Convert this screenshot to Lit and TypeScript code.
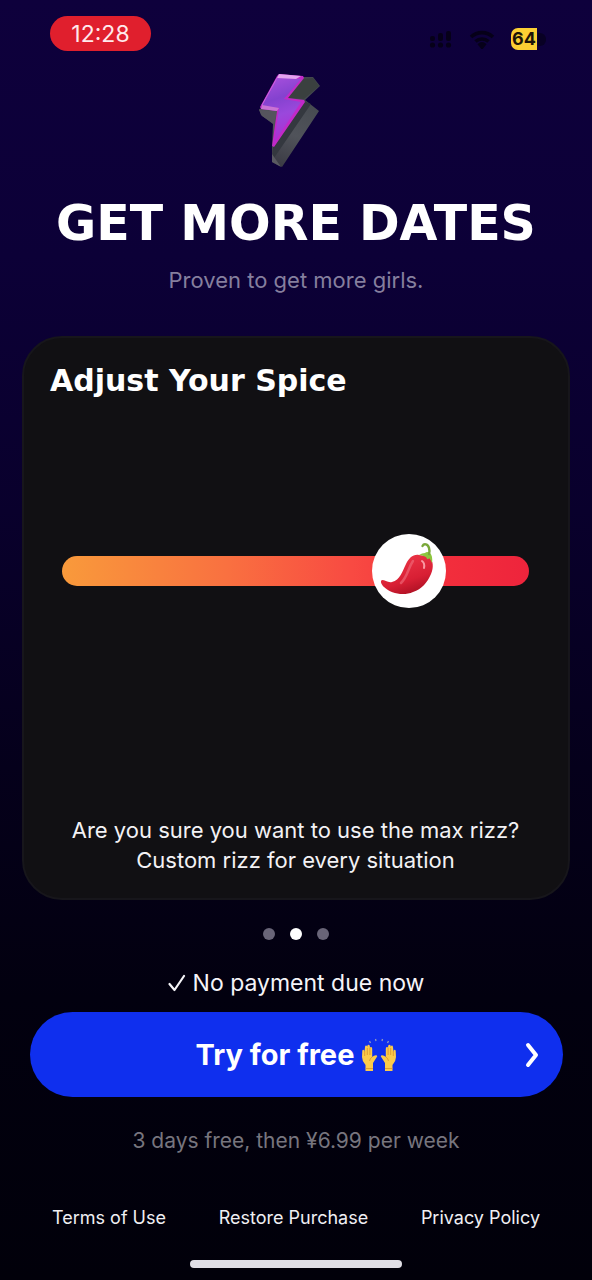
import { LitElement, html, css } from "lit";
import { customElement, state } from "lit/decorators.js";

@customElement("status-bar")
class StatusBar extends LitElement {
  static styles = css`
    :host { display: flex; justify-content: space-between; align-items: flex-start; padding: 16px 46px 0 50px; height: 56px; box-sizing: border-box; }
    .time { width: 101px; height: 35px; border-radius: 18px; background: #e01f2d; color: #ffe9ec; font-size: 23px; line-height: 36px; text-align: center; }
    .icons { display: flex; align-items: center; gap: 16px; padding-top: 12px; }
    .icons svg { display: block; }
    .battery { display: flex; align-items: center; }
    .level { width: 26px; height: 22px; border-radius: 7px 0 0 7px; background: #fbcf33; color: #1d1408; font-size: 18px; line-height: 22px; font-weight: 700; text-align: center; }
    .cap { width: 8px; height: 13px; margin-left: 1px; border-radius: 0 6px 6px 0; background: #080024; }
  `;
  render() {
    return html`
      <div class="time">12:28</div>
      <div class="icons">
        <svg width="24" height="18" viewBox="0 0 24 18" fill="#060019" aria-hidden="true">
          <rect x="1" y="6" width="5" height="5" rx="2"/><rect x="9" y="3" width="5" height="8" rx="2"/><rect x="17" y="1" width="5" height="10" rx="2"/>
          <circle cx="3.5" cy="15" r="2.6"/><circle cx="11.5" cy="15" r="2.6"/><circle cx="19.5" cy="15" r="2.6"/>
        </svg>
        <svg width="26" height="19" viewBox="0 0 26 19" fill="none" stroke="#060019" stroke-width="3.600" aria-hidden="true">
          <path d="M2 7a16 16 0 0 1 22 0M6.500 11.500a9.500 9.500 0 0 1 13 0"/><path d="M13 17l-2-2.500q2-1.500 4 0z" fill="#060019"/>
        </svg>
        <div class="battery"><div class="level">64</div><div class="cap"></div></div>
      </div>
    `;
  }
}

@customElement("spice-slider")
class SpiceSlider extends LitElement {
  @state() private value = 79;
  static styles = css`
    :host { display: block; }
    .slider { position: relative; height: 74px; }
    input { -webkit-appearance: none; appearance: none; display: block; width: 100%; height: 74px; margin: 0; background: transparent; cursor: pointer; }
    input::-webkit-slider-runnable-track { height: 30px; border-radius: 15px; background: linear-gradient(90deg, #f99a3b 0%, #f97140 35%, #f84a42 62%, #f22e3c 82%, #ee243c 100%); }
    input::-webkit-slider-thumb { -webkit-appearance: none; width: 74px; height: 74px; margin-top: -22px; border-radius: 50%; background: #fff; }
    .pepper { position: absolute; top: 0; width: 74px; height: 74px; pointer-events: none; }
  `;
  render() {
    return html`
      <div class="slider">
        <input type="range" min="0" max="100" aria-label="Spice level" .value=${String(this.value)}
          @input=${(e: Event) => (this.value = Number((e.target as HTMLInputElement).value))} />
        <svg class="pepper" style="left: calc((100% - 74px) * ${this.value / 100})" viewBox="0 0 74 74" aria-hidden="true">
          <defs>
            <linearGradient id="red" x1="0.300" y1="0.100" x2="0.700" y2="1">
              <stop offset="0" stop-color="#ea3345"/><stop offset="0.600" stop-color="#d81f34"/><stop offset="1" stop-color="#a90f22"/>
            </linearGradient>
          </defs>
          <path d="M47 21C41 20 37 24 34 30C30 38 28 46 20 48C16 49 13 46 10 46C8 47 9 50 12 53C19 60 32 62 41 58C50 55 55 49 59 40C62 33 61 27 58 24Q53 21 47 21Z" fill="url(#red)"/>
          <path d="M41 27C36 34 36 42 29 49" fill="none" stroke="#f0707e" stroke-width="2.500" stroke-linecap="round" opacity="0.600"/>
          <path d="M50 27Q53 29 52 34" fill="none" stroke="#ffb7bd" stroke-width="2" stroke-linecap="round" opacity="0.800"/>
          <path d="M47 21Q50 19 53 19Q55 17 58 19Q61 22 60 29Q59 26 57 24Q56 27 54 23Q50 21 47 21Z" fill="#8cc63d"/>
          <path d="M57 20Q58 17 57 14C56 10 52 9 50.500 12" fill="none" stroke="#7aa83a" stroke-width="2.400" stroke-linecap="round"/>
        </svg>
      </div>
    `;
  }
}

@customElement("app-root")
class AppRoot extends LitElement {
  @state() private page = 1;
  static styles = css`
    :host { display: block; font-family: Inter, "Liberation Sans", sans-serif; color: #fff; }
    .screen { display: flex; flex-direction: column; min-height: 100vh; box-sizing: border-box; padding-bottom: 12px; background: linear-gradient(180deg, #0e003c 0%, #0c0037 20%, #09002c 40%, #05001b 60%, #02000f 78%, #01000a 100%); }
    .bolt { display: block; width: 64px; height: 98px; margin: 15px auto 0; padding-right: 14px; }
    h1 { margin: 27px 0 0; font-family: "DejaVu Sans", sans-serif; font-size: 49px; line-height: 56px; font-weight: 700; text-align: center; white-space: nowrap; }
    .sub { margin: 13px 0 0; font-size: 22px; line-height: 30px; text-align: center; color: #857f9e; }
    .card { display: flex; flex-direction: column; flex: 1; margin: 41px 22px 0; padding: 23px 39px 23px 38px; border: 2px solid #17161b; border-radius: 40px; background: #111013; }
    h2 { margin: 0 0 0 -12px; font-family: "DejaVu Sans", sans-serif; font-size: 30px; line-height: 40px; font-weight: 700; }
    spice-slider { margin-top: 133px; }
    .copy { margin: auto 0 0; font-size: 22px; line-height: 30px; text-align: center; color: #f3f2f5; }
    .dots { display: flex; justify-content: center; gap: 15px; margin-top: 28px; }
    .dot { width: 12px; height: 12px; padding: 0; border: 0; border-radius: 50%; background: #696578; cursor: pointer; }
    .dot.on { background: #fff; }
    .due { display: flex; align-items: center; justify-content: center; gap: 7px; margin: 28px 0 0; font-size: 23px; line-height: 30px; color: #f5f4f8; }
    .cta { display: flex; align-items: center; justify-content: center; position: relative; height: 85px; margin: 14px 29px 0 30px; padding: 0; border: 0; border-radius: 43px; background: #0f2fee; color: #fff; font-family: inherit; font-size: 29px; font-weight: 700; gap: 7px; cursor: pointer; }
    .chevron { position: absolute; right: 24px; }
    .price { margin: 29px 0 0; font-size: 21px; line-height: 30px; text-align: center; color: #77757e; }
    .links { display: flex; justify-content: space-between; margin: 49px 52px 0; font-size: 18px; line-height: 26px; }
    .links a { color: #f0eff3; text-decoration: none; }
    .home { width: 212px; height: 8px; margin: 29px auto 0; border-radius: 4px; background: #e0dee6; }
  `;
  render() {
    return html`
      <main class="screen">
        <status-bar></status-bar>
        <svg class="bolt" viewBox="0 0 64 98" aria-hidden="true">
          <defs>
            <linearGradient id="face" x1="0.200" y1="0" x2="0.400" y2="1">
              <stop offset="0" stop-color="#a850dd"/><stop offset="0.350" stop-color="#8442cf"/><stop offset="0.600" stop-color="#9a48dc"/><stop offset="1" stop-color="#b02cd0"/>
            </linearGradient>
            <linearGradient id="side" x1="0.600" y1="0" x2="0.300" y2="1">
              <stop offset="0" stop-color="#41464c"/><stop offset="0.600" stop-color="#50535a"/><stop offset="1" stop-color="#3a3a43"/>
            </linearGradient>
          </defs>
          <path d="M46 6L56 6L63 15L48 29L62 40L25 96L15 91L15 76L16 53L4 44L2 38L20 36Z" fill="url(#side)"/>
          <path d="M47 8L56 7L62 15L47 28L31 27Z" fill="#3a403f"/>
          <path d="M16 75L47 30L54 33L17 87L15 90Z" fill="#34383f"/>
          <path d="M2 39L20 40L17 53L5 45Z" fill="#55545d"/>
          <path d="M24 96L15 91L15 83Z" fill="#5a5a61"/>
          <path d="M22 3L46 5L47 7L31 27L47 29L48 31L17 76L15 75L20 40L4 38L3 36L20 5Z" fill="#c229c8"/>
          <path d="M21 6L44 8L27 28L44 31L17 72L22 37L5 35Z" fill="url(#face)"/>
          <path d="M22 3L44 5L39 8L20 7Z" fill="#e3a3ee"/>
          <path d="M5 34L22 37L20 40L4 38Z" fill="#c873d3"/>
          <path d="M20 7L5 34" fill="none" stroke="#c268df" stroke-width="1"/>
        </svg>
        <h1>GET MORE DATES</h1>
        <p class="sub">Proven to get more girls.</p>
        <section class="card">
          <h2>Adjust Your Spice</h2>
          <spice-slider></spice-slider>
          <p class="copy">Are you sure you want to use the max rizz?<br />Custom rizz for every situation</p>
        </section>
        <div class="dots">
          ${[0, 1, 2].map((i) => html`<button class="dot ${i === this.page ? "on" : ""}" aria-label="Slide ${i + 1}" @click=${() => (this.page = i)}></button>`)}
        </div>
        <p class="due">
          <svg width="18" height="20" viewBox="0 0 18 20" fill="none" stroke="currentColor" stroke-width="2.200" stroke-linecap="round" stroke-linejoin="round" aria-hidden="true"><path d="M1.500 11L6.500 17L16 3"/></svg>
          No payment due now
        </p>
        <button class="cta">
          Try for free
          <svg width="36" height="34" viewBox="0 0 36 34" aria-hidden="true">
            <defs>
              <g id="hand">
                <path d="M4.500 33V27Q1 23 1 19L1.300 13Q1.500 11.500 2.500 11.700Q3.500 12 3.500 14L4 9Q4.200 7.500 5.300 7.600Q6.400 8 6.300 9.500V8Q6.500 6.700 7.700 6.700Q8.900 7 8.900 8.500V10Q9.200 8.700 10.300 9Q11.300 9.400 11.200 11V19Q13 17 15.500 17.300Q17 18 15.500 19.500L12 25V33Z" fill="#fccb4b"/>
                <path d="M3.700 13V18M6.300 10V17M8.900 10V17M11.200 19Q9 20 8.500 23M4.500 30.500H12" fill="none" stroke="#d9902b" stroke-width="0.800"/>
              </g>
            </defs>
            <use href="#hand"/><use href="#hand" transform="translate(36 0) scale(-1 1)"/>
            <path d="M8.500 3l1 2M14.500 1l0.500 2M21.500 1l-0.500 2M27.500 3l-1 2" stroke="#8f98bd" stroke-width="1.300"/>
          </svg>
          <svg class="chevron" width="14" height="28" viewBox="0 0 14 28" fill="none" stroke="#fff" stroke-width="4" stroke-linecap="round" stroke-linejoin="round" aria-hidden="true"><path d="M3 4L11 14L3 24"/></svg>
        </button>
        <p class="price">3 days free, then ¥6.99 per week</p>
        <nav class="links"><a href="#terms">Terms of Use</a><a href="#restore">Restore Purchase</a><a href="#privacy">Privacy Policy</a></nav>
        <div class="home"></div>
      </main>
    `;
  }
}
